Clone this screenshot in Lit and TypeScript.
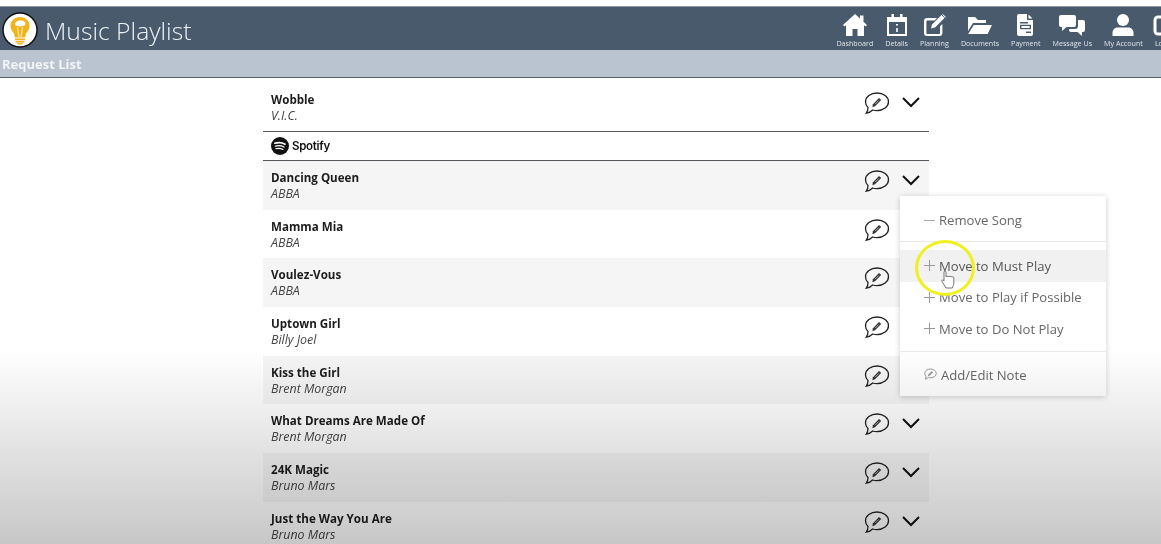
import { LitElement, html, css, svg } from 'lit';
import { customElement } from 'lit/decorators.js';

const songs = [
  ['Dancing Queen', 'ABBA'],
  ['Mamma Mia', 'ABBA'],
  ['Voulez-Vous', 'ABBA'],
  ['Uptown Girl', 'Billy Joel'],
  ['Kiss the Girl', 'Brent Morgan'],
  ['What Dreams Are Made Of', 'Brent Morgan'],
  ['24K Magic', 'Bruno Mars'],
  ['Just the Way You Are', 'Bruno Mars'],
];

const navItems = [
  ['Dashboard', svg`<path fill="#fff" d="M13 0 1 11l1.400 1.600L4 11.200V22h6.500v-7h5v7H22V11.200l1.600 1.400L25 11l-3.500-3.200V1.500H18v3.100z"/>`],
  ['Details', svg`<path fill="#fff" fill-rule="evenodd" d="M7.500 0h2.400v3h6.200V0h2.400v3H23v19H3V3h4.500zM5 8v12h16V8zM12 10h2v1.500h-2zM12.200 14h1.600v4h-1.600z"/>`],
  ['Planning', svg`<path fill="#fff" d="M6 4h10l-2.400 2.400H6.500a1.100 1.100 0 0 0-1.100 1.100v11.400c0 .6.5 1.100 1.100 1.100h11.400c.6 0 1.100-.5 1.100-1.100v-6.600l2.400-2.400V19a3 3 0 0 1-3 3H6a3 3 0 0 1-3-3V7a3 3 0 0 1 3-3zM20.500 1l3 3L14 13.500l-4 1 1-4zM21.800 0 24.900 3.100l-.6.6-3-3z"/>`],
  ['Documents', svg`<path fill="#fff" d="M1 3h7l3 3h8v3H6L1 17zM6.800 11H25l-4.400 9H1.200z"/>`],
  ['Payment', svg`<path fill="#fff" fill-rule="evenodd" d="M6 0h8v6h6v14a2 2 0 0 1-2 2H6a2 2 0 0 1-2-2V2a2 2 0 0 1 2-2zM15.500.5 19.500 4.500h-4zM7 8v1.400h8V8zM7 10.800v4.400h11v-4.400zM8.400 12.100h8.200v1.800H8.400zM13 17.500v1.400h5v-1.400z"/>`],
  ['Message Us', svg`<path fill="#fff" d="M2 1h13a2 2 0 0 1 2 2v8a2 2 0 0 1-2 2H7.500L3 17v-4H2a2 2 0 0 1-2-2V3a2 2 0 0 1 2-2z"/><path fill="#fff" d="M19 6h5a2 2 0 0 1 2 2v8a2 2 0 0 1-2 2h-1v4l-4.500-4H12a2 2 0 0 1-2-2v-1h6a3 3 0 0 0 3-3z"/>`],
  ['My Account', svg`<circle fill="#fff" cx="13" cy="6" r="6"/><path fill="#fff" d="M7.500 13.500h11c3 0 5 2.500 5 5.500v3h-21v-3c0-3 2-5.500 5-5.500z"/>`],
  ['Logout', svg`<path fill="none" stroke="#fff" stroke-width="3" d="M8 3H5a3 3 0 0 0-3 3v11a3 3 0 0 0 3 3h3"/>`],
];

const noteIcon = html`<svg class="note" viewBox="0 0 26 24" width="26" height="24">
  <path fill="none" stroke="#222" stroke-width="1.300" d="M4 15.500C2.500 14 1.500 12 1.500 9.800 1.500 5 6.600 1 13 1s11.500 4 11.500 8.800S19.400 18.600 13 18.600c-1.500 0-3-.2-4.400-.6-1.600 1.700-3.800 2.800-6.300 3.200C3.400 19.800 4 18 4 15.500z"/>
  <path fill="#333" d="m15 6 2.200 2-6.200 6.200-2.700 1 .7-2.900z"/>
  <path fill="none" stroke="#ccc" stroke-width=".8" d="m11 12.200 3.800-3.800"/>
</svg>`;

const chevron = html`<svg class="chevron" viewBox="0 0 18 11" width="18" height="11">
  <path fill="none" stroke="#111" stroke-width="2" d="m1 1 8 8 8-8"/>
</svg>`;

@customElement('app-root')
export class AppRoot extends LitElement {
  static styles = css`
    :host {
      display: block;
      position: relative;
      height: 544px;
      overflow: hidden;
      background: #fff;
      font-family: "Open Sans", "Liberation Sans", sans-serif;
      filter: blur(0.4px);
    }
    .strip {
      box-sizing: border-box;
      height: 7px;
      border-bottom: 1px solid #8f959b;
    }
    .header {
      display: flex;
      align-items: flex-start;
      height: 43px;
      background: #485a6c;
      overflow: hidden;
    }
    .logo {
      flex: none;
      margin: 5px 0 0 2px;
    }
    .title {
      margin: 6px 0 0 7px;
      color: #eef2f6;
      font-size: 24.700px;
      font-weight: 300;
      line-height: 36px;
      white-space: nowrap;
    }
    .nav {
      display: flex;
      flex: none;
      gap: 12px;
      margin: 7px -17px 0 auto;
    }
    .nav-item {
      display: flex;
      flex-direction: column;
      align-items: center;
      color: #dfe5ea;
      font-size: 7.150px;
      line-height: 10px;
      white-space: nowrap;
    }
    .nav-item svg {
      display: block;
      height: 22px;
      margin: 0 -8px 2px;
    }
    .subbar {
      height: 28px;
      box-sizing: border-box;
      padding-left: 2px;
      background: #bac4d0;
      border-bottom: 1px solid #5c6167;
      color: #f2f4f7;
      font-size: 13px;
      font-weight: 700;
      line-height: 29px;
    }
    .list {
      width: 666px;
      margin-left: 263px;
      padding-top: 5px;
    }
    .row {
      display: flex;
      align-items: flex-start;
      height: 48.700px;
      box-sizing: border-box;
      padding: 9px 9px 0 8px;
    }
    .row.first {
      height: 48px;
    }
    .songs .row:nth-child(odd) {
      background: #f5f5f5;
    }
    .text {
      flex: 1;
    }
    .name {
      color: #1c1c1c;
      font-size: 11.600px;
      font-weight: 700;
      line-height: 16px;
    }
    .artist {
      color: #444;
      font-size: 12.400px;
      font-style: italic;
      line-height: 16px;
    }
    .note {
      display: block;
      flex: none;
      margin-right: 12px;
    }
    .chevron {
      display: block;
      flex: none;
      margin-top: 5px;
    }
    .spotify {
      display: flex;
      align-items: center;
      gap: 3px;
      height: 30px;
      box-sizing: border-box;
      padding: 0 0 1px 8px;
      border-top: 1px solid #55595d;
      border-bottom: 1px solid #55595d;
    }
    .spotify span {
      color: #111;
      font-family: Inter, sans-serif;
      font-size: 11.500px;
      font-weight: 600;
      letter-spacing: -0.3px;
    }
    .menu {
      position: absolute;
      left: 900px;
      top: 196px;
      width: 206px;
      background: #fff;
      box-shadow: 0 1px 6px rgba(0, 0, 0, 0.2);
      color: #666;
      font-size: 13.100px;
    }
    .section {
      padding: 8px 0 5px;
      border-bottom: 1px solid #e9e9e9;
    }
    .section:last-child {
      padding-top: 7px;
      border-bottom: none;
    }
    .section.moves {
      padding: 8px 0 6px;
    }
    .item {
      display: flex;
      align-items: center;
      gap: 4px;
      height: 32px;
      padding-left: 24px;
    }
    .moves .item {
      height: 31.500px;
    }
    .item.hover {
      background: #f1f1f1;
      color: #555;
    }
    .item svg {
      flex: none;
    }
    .ring {
      position: absolute;
      left: 915px;
      top: 240px;
      width: 60px;
      height: 56px;
      box-sizing: border-box;
      border: 3.500px solid #f0f020;
      border-radius: 50%;
      pointer-events: none;
    }
    .hand {
      position: absolute;
      left: 941px;
      top: 270px;
    }
    .shade {
      position: absolute;
      left: 0;
      right: 0;
      top: 350px;
      bottom: 0;
      background: linear-gradient(to bottom, rgba(0, 0, 0, 0), rgba(0, 0, 0, 0.22));
      pointer-events: none;
    }
  `;

  render() {
    return html`
      <div class="strip"></div>
      <div class="header">
        <svg class="logo" viewBox="0 0 36 36" width="36" height="36">
          <circle cx="18" cy="18" r="17" fill="#fff" stroke="#111" stroke-width="1.500"/>
          <path fill="#f2b41b" d="M18 5c5.500 0 9.500 3.800 9.500 9 0 3.600-2.400 5.500-3.500 8-.5 1.200-.7 2.300-.8 3.500H12.800c-.1-1.200-.3-2.300-.8-3.500-1.100-2.500-3.500-4.400-3.500-8 0-5.200 4-9 9.500-9z"/>
          <path fill="#fff" d="M13 12c.5-2.500 3-4 5.500-3.500 2.800-.4 5 1.200 5 3.300 0 1.500-1.500 2.200-3 2-1.500.8-3.500.8-4.500 0-1.500.5-3-.4-3-1.800z"/>
          <path fill="none" stroke="#fff" stroke-width=".8" d="m15.500 15 1.500 10M20.500 15 19 25"/>
          <path fill="#f2b41b" d="M13 26.500h10v1.700H13zM13.500 29h9v1.500h-9zM15 31h6l-1 1.500h-4z"/>
        </svg>
        <div class="title">Music Playlist</div>
        <div class="nav">
          ${navItems.map(
            ([label, icon]) => html`
              <div class="nav-item">
                <svg viewBox="0 0 26 22" width="26" height="22">${icon}</svg>
                ${label}
              </div>
            `
          )}
        </div>
      </div>
      <div class="subbar">Request List</div>
      <div class="list">
        ${this.renderRow('Wobble', 'V.I.C.', 'first')}
        <div class="spotify">
          <svg viewBox="0 0 18 18" width="18" height="18">
            <circle cx="9" cy="9" r="9" fill="#111"/>
            <path fill="none" stroke="#fff" stroke-width="1.600" stroke-linecap="round" d="M3.800 6.300c3.400-1 7.400-.7 10.300.9"/>
            <path fill="none" stroke="#fff" stroke-width="1.300" stroke-linecap="round" d="M4.300 9.100c3-.8 6.300-.5 8.800.9"/>
            <path fill="none" stroke="#fff" stroke-width="1.100" stroke-linecap="round" d="M4.800 11.700c2.500-.6 5-.4 7.200.8"/>
          </svg>
          <span>Spotify</span>
        </div>
        <div class="songs">
          ${songs.map(([name, artist]) => this.renderRow(name, artist, ''))}
        </div>
      </div>
      <div class="menu">
        <div class="section">
          <div class="item">
            <svg width="11" height="11" viewBox="0 0 11 11"><path stroke="#aaa" d="M0 5.500h11"/></svg>
            Remove Song
          </div>
        </div>
        <div class="section moves">
          <div class="item hover">${this.plus()} Move to Must Play</div>
          <div class="item">${this.plus()} Move to Play if Possible</div>
          <div class="item">${this.plus()} Move to Do Not Play</div>
        </div>
        <div class="section">
          <div class="item">
            <svg width="13" height="13" viewBox="0 0 26 24">
              <path fill="none" stroke="#999" stroke-width="2" d="M4 15.500C2.500 14 1.500 12 1.500 9.800 1.500 5 6.600 1 13 1s11.500 4 11.500 8.800S19.400 18.600 13 18.600c-1.500 0-3-.2-4.400-.6-1.600 1.700-3.800 2.800-6.300 3.200C3.400 19.800 4 18 4 15.500z"/>
              <path fill="#999" d="m15.200 5 2.800 2.600-6.700 6.900-3.500 1 .9-3.600z"/>
            </svg>
            Add/Edit Note
          </div>
        </div>
      </div>
      <div class="ring"></div>
      <svg class="hand" width="14" height="20" viewBox="0 0 14 20">
        <path fill="#fff" stroke="#666" stroke-width=".9" d="M3 2c0-1.300 2-1.300 2 0v5c0-1 2-1 2 0 0-1 2-1 2 0 0-.8 2-.8 2 .2 0-.6 1.800-.5 1.800.5V13c0 2-.8 3.500-1.500 5H5L1 11.500c-.7-1.300.8-2.300 1.800-1L3 11z"/>
      </svg>
      <div class="shade"></div>
    `;
  }

  plus() {
    return html`<svg width="11" height="11" viewBox="0 0 11 11"><path stroke="#999" d="M0 5.500h11M5.500 0v11"/></svg>`;
  }

  renderRow(name: string, artist: string, extra: string) {
    return html`
      <div class="row ${extra}">
        <div class="text">
          <div class="name">${name}</div>
          <div class="artist">${artist}</div>
        </div>
        ${noteIcon}${chevron}
      </div>
    `;
  }
}
